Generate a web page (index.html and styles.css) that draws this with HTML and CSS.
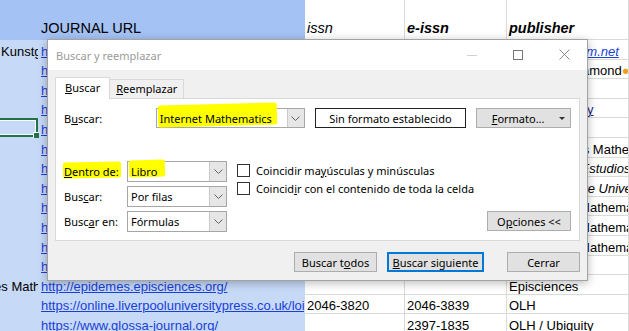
FILE: index.html
```html
<!DOCTYPE html>
<html lang="es">
<head>
    <meta charset="UTF-8">
    <meta name="viewport" content="width=device-width, initial-scale=1.0">
    <title>Buscar y reemplazar</title>
    <link rel="stylesheet" href="styles.css">
</head>
<body>
    <div class="sheet">
        <div class="row head">
            <div class="c sel-h"></div>
            <div class="c sel-h">JOURNAL URL</div>
            <div class="c it">issn</div>
            <div class="c bi">e-issn</div>
            <div class="c bi">publisher</div>
        </div>
        <div class="row">
            <div class="c sel">Kunstgeschichte</div>
            <div class="c sel"><a class="link">http://www.kunstgeschichte-ejournal.net/</a></div>
            <div class="c"></div><div class="c"></div>
            <div class="c it"><a class="link">http://www.ecm.net</a></div>
        </div>
        <div class="row">
            <div class="c sel"></div>
            <div class="c sel"><a class="link">https://www.journals.uio.no/</a></div>
            <div class="c"></div><div class="c"></div>
            <div class="c">Non-profit Diamond<span class="dot">●</span></div>
        </div>
        <div class="row">
            <div class="c sel"></div>
            <div class="c sel"><a class="link">https://www.imrn.oxfordjournals.org/</a></div>
            <div class="c"></div><div class="c"></div><div class="c"></div>
        </div>
        <div class="row">
            <div class="c sel"></div>
            <div class="c sel"><a class="link">https://www.ubiquitypress.com/</a></div>
            <div class="c"></div><div class="c"></div>
            <div class="c"><a class="link dark">OLH / Ubiquity</a></div>
        </div>
        <div class="row">
            <div class="c sel cur"></div>
            <div class="c sel"><a class="link">http://www.emis.de/journals/</a></div>
            <div class="c"></div><div class="c"></div><div class="c"></div>
        </div>
        <div class="row">
            <div class="c sel"></div>
            <div class="c sel"><a class="link">https://publi.math.unideb.hu/</a></div>
            <div class="c"></div><div class="c"></div>
            <div class="c">Publicaciones Mathematicae</div>
        </div>
        <div class="row">
            <div class="c sel"></div>
            <div class="c sel"><a class="link">https://revistas.ucm.es/</a></div>
            <div class="c"></div><div class="c"></div>
            <div class="c it">Revistas de Estudios</div>
        </div>
        <div class="row">
            <div class="c sel"></div>
            <div class="c sel"><a class="link">https://msupress.org/journals/</a></div>
            <div class="c"></div><div class="c"></div>
            <div class="c it">Michigan State University Press</div>
        </div>
        <div class="row">
            <div class="c sel"></div>
            <div class="c sel"><a class="link">https://ems.press/journals/pm</a></div>
            <div class="c"></div><div class="c"></div>
            <div class="c">Portuguese Mathematical Society</div>
        </div>
        <div class="row">
            <div class="c sel"></div>
            <div class="c sel"><a class="link">https://ems.press/journals/rmi</a></div>
            <div class="c"></div><div class="c"></div>
            <div class="c">Portuguese Mathematical Society</div>
        </div>
        <div class="row">
            <div class="c sel"></div>
            <div class="c sel"><a class="link">https://ems.press/journals/jems</a></div>
            <div class="c"></div><div class="c"></div>
            <div class="c">Portuguese Mathematical Society</div>
        </div>
        <div class="row">
            <div class="c sel"></div>
            <div class="c sel"><a class="link">https://www.internetmathematicsjournal.com/</a></div>
            <div class="c"></div><div class="c"></div><div class="c"></div>
        </div>
        <div class="row">
            <div class="c sel cut">Epidemes Mathematics</div>
            <div class="c sel"><a class="link">http://epidemes.episciences.org/</a></div>
            <div class="c"></div><div class="c"></div>
            <div class="c">Episciences</div>
        </div>
        <div class="row">
            <div class="c sel"></div>
            <div class="c sel"><a class="link">https://online.liverpooluniversitypress.co.uk/loi/bjs</a></div>
            <div class="c">2046-3820</div>
            <div class="c">2046-3839</div>
            <div class="c">OLH</div>
        </div>
        <div class="row">
            <div class="c sel"></div>
            <div class="c sel"><a class="link">https://www.glossa-journal.org/</a></div>
            <div class="c"></div>
            <div class="c">2397-1835</div>
            <div class="c">OLH / Ubiquity</div>
        </div>
    </div>

    <div class="dialog">
        <div class="titlebar">
            <span class="title">Buscar y reemplazar</span>
            <div class="win-btns">
                <span class="win-btn"><svg width="10" height="10" viewBox="0 0 10 10"><path d="M0 5.5h10" stroke="#d2d2d2"/></svg></span>
                <span class="win-btn"><svg width="10" height="10" viewBox="0 0 10 10"><rect x=".5" y=".5" width="9" height="9" fill="none" stroke="#767676"/></svg></span>
                <span class="win-btn"><svg width="11" height="11" viewBox="0 0 11 11"><path d="M.5 .5l10 10M10.5 .5l-10 10" stroke="#8c8c8c"/></svg></span>
            </div>
        </div>

        <div class="dlg-body">
            <div class="tabs">
                <div class="tab on"><u>B</u>uscar</div>
                <div class="tab"><u>R</u>eemplazar</div>
            </div>

            <div class="panel">
                <div class="find-row">
                    <span class="lbl">B<u>u</u>scar:</span>
                    <div class="combo wide">
                        <span class="val"><span class="hl hl-find">Internet Mathematics</span></span>
                        <span class="arrow"><svg width="9" height="5" viewBox="0 0 9 5"><path d="M.5 .5l4 4 4-4" fill="none" stroke="#606060"/></svg></span>
                    </div>
                    <div class="fmt-box">Sin formato establecido</div>
                    <div class="btn fmt"><span><u>F</u>ormato...</span></div>
                </div>

                <div class="opts">
                    <div class="opt-grid">
                        <span class="lbl"><span class="hl hl-within"><u>D</u>entro de:</span></span>
                        <div class="combo">
                            <span class="val"><span class="hl hl-book">Libro</span></span>
                            <span class="arrow"><svg width="9" height="5" viewBox="0 0 9 5"><path d="M.5 .5l4 4 4-4" fill="none" stroke="#606060"/></svg></span>
                        </div>
                        <span class="lbl">Bus<u>c</u>ar:</span>
                        <div class="combo">
                            <span class="val">Por filas</span>
                            <span class="arrow"><svg width="9" height="5" viewBox="0 0 9 5"><path d="M.5 .5l4 4 4-4" fill="none" stroke="#606060"/></svg></span>
                        </div>
                        <span class="lbl">Busc<u>a</u>r en:</span>
                        <div class="combo">
                            <span class="val">Fórmulas</span>
                            <span class="arrow"><svg width="9" height="5" viewBox="0 0 9 5"><path d="M.5 .5l4 4 4-4" fill="none" stroke="#606060"/></svg></span>
                        </div>
                    </div>

                    <div class="checks">
                        <label class="check"><span class="box"></span><span>Coincidir ma<u>y</u>úsculas y minúsculas</span></label>
                        <label class="check"><span class="box"></span><span>Coincid<u>i</u>r con el contenido de toda la celda</span></label>
                    </div>

                    <div class="btn opts-btn"><span>O<u>p</u>ciones &lt;&lt;</span></div>
                </div>
            </div>

            <div class="actions">
                <div class="btn all"><span>Buscar t<u>o</u>dos</span></div>
                <div class="btn next"><span><u>B</u>uscar siguiente</span></div>
                <div class="btn close">Cerrar</div>
            </div>
        </div>
    </div>
</body>
</html>
```

FILE: styles.css
```css
* { margin: 0; padding: 0; box-sizing: border-box; }

body {
    width: 629px;
    height: 331px;
    overflow: hidden;
    position: relative;
    background: #ffffff;
    font-family: "Liberation Sans", Arial, sans-serif;
    font-size: 13px;
    color: #000000;
}

/* spreadsheet behind the dialog */
.sheet { display: flex; flex-direction: column; }

.row {
    display: grid;
    grid-template-columns: 39px 266px 100px 102px 122px;
    height: 19.6px;
    flex-shrink: 0;
}

.row.head { height: 40px; font-size: 14.5px; }
.row.head .c { padding-bottom: 2px; line-height: 17px; }

.c {
    display: flex;
    align-items: flex-end;
    padding-left: 2px;
    white-space: nowrap;
    overflow: hidden;
    line-height: 15px;
    border-right: 1px solid #dadada;
    border-bottom: 1px solid #dadada;
    position: relative;
}

.sel { background: #c6d9f7; border-color: transparent; }
.sel-h { background: #a4c2f4; border-color: transparent; }
.sel:first-child { padding-left: 1px; }

.it { font-style: italic; }
.bi { font-style: italic; font-weight: 700; }

.link { color: #1a3fd6; text-decoration: underline; }
.link.dark { color: #1b2a80; }

.dot { color: #f2a01c; }

.cut { text-indent: -51px; }

/* active cell of the selection */
.cur { overflow: visible; }
.cur::before {
    content: '';
    position: absolute;
    left: -3px;
    top: 0;
    right: 0;
    bottom: 0;
    border: 2px solid #217346;
    box-shadow: inset 0 0 0 1px #ffffff;
}
.cur::after {
    content: '';
    position: absolute;
    right: -3px;
    bottom: -3px;
    width: 6px;
    height: 6px;
    background: #217346;
    border: 1px solid #ffffff;
}

/* find & replace dialog */
.dialog {
    position: absolute;
    left: 47px;
    top: 39px;
    width: 541px;
    height: 242px;
    border: 1px solid #a3a3a3;
    background: #f0f0f0;
    box-shadow: 0 2px 9px rgba(0, 0, 0, 0.28);
    display: flex;
    flex-direction: column;
    font-family: "Segoe UI", "Noto Sans", sans-serif;
    font-size: 11px;
    color: #000000;
}

.titlebar {
    height: 30px;
    background: #ffffff;
    display: flex;
    align-items: center;
    flex-shrink: 0;
}

.title { padding-left: 8px; color: #9a9a9a; }

.win-btns { margin-left: auto; display: flex; }

.win-btn {
    width: 46px;
    height: 30px;
    display: flex;
    align-items: center;
    justify-content: center;
    padding-bottom: 1px;
}

.dlg-body {
    flex: 1;
    padding: 7px 7px 8px;
    display: flex;
    flex-direction: column;
}

.tabs {
    display: flex;
    align-items: flex-end;
    height: 21px;
}

.tab {
    height: 19px;
    padding: 0 6px;
    line-height: 18px;
    border: 1px solid #d9d9d9;
    border-bottom: 0;
    border-left: 0;
}

.tab.on {
    height: 22px;
    margin-bottom: -1px;
    padding: 0 9px;
    line-height: 20px;
    background: #ffffff;
    border-left: 1px solid #d9d9d9;
    position: relative;
    z-index: 1;
}

.panel {
    height: 143px;
    background: #ffffff;
    border: 1px solid #d9d9d9;
    padding: 9px 8px 8px;
    display: flex;
    flex-direction: column;
}

.find-row {
    display: flex;
    align-items: center;
    gap: 10px;
    height: 20px;
}

.find-row .lbl { width: 82px; }

.combo {
    display: flex;
    height: 21px;
    border: 1px solid #a6a6a6;
    background: #ffffff;
}

.combo.wide { width: 149px; height: 20px; }

.combo .val {
    flex: 1;
    padding-left: 3px;
    display: flex;
    align-items: center;
    white-space: nowrap;
}

.combo .arrow {
    width: 17px;
    background: #e6e6e6;
    border-left: 1px solid #c9c9c9;
    display: flex;
    align-items: center;
    justify-content: center;
}

.fmt-box {
    width: 152px;
    height: 20px;
    border: 1px solid #222222;
    background: #ffffff;
    display: flex;
    align-items: center;
    justify-content: center;
}

.btn {
    height: 20px;
    border: 1px solid #adadad;
    background: #e1e1e1;
    display: flex;
    align-items: center;
    justify-content: center;
    white-space: nowrap;
}

.btn.fmt { width: 95px; position: relative; padding-right: 11px; }
.btn.fmt::after {
    content: '';
    position: absolute;
    right: 5px;
    top: 8px;
    border-left: 3px solid transparent;
    border-right: 3px solid transparent;
    border-top: 3px solid #333333;
}

.opts { display: flex; margin-top: 33px; }

.opt-grid {
    display: grid;
    grid-template-columns: 63px 100px;
    grid-auto-rows: 21px;
    row-gap: 4px;
    align-items: center;
}

.checks { margin-left: 10px; display: flex; flex-direction: column; }

.check {
    height: 18px;
    display: flex;
    align-items: center;
    gap: 6px;
    white-space: nowrap;
}

.box {
    width: 13px;
    height: 13px;
    border: 1px solid #333333;
    background: #ffffff;
}

.btn.opts-btn { width: 84px; margin-left: auto; align-self: flex-end; margin-bottom: 1px; }

.actions {
    display: flex;
    justify-content: flex-end;
    gap: 10px;
    margin-top: 11px;
}

.btn.all { width: 83px; }
.btn.next { width: 97px; border: 2px solid #0078d7; margin-right: 13px; }
.btn.close { width: 73px; }

/* yellow marker strokes */
.hl { position: relative; z-index: 0; }
.hl::before {
    content: '';
    position: absolute;
    z-index: -1;
    background: #ffff00;
    border-radius: 2px;
}
.hl-find::before { left: -2px; right: -5px; top: -7px; bottom: 0; transform: rotate(-1.5deg); }
.hl-within::before { left: -1px; right: -2px; top: -2px; bottom: 1px; transform: rotate(-1deg); }
.hl-book::before { left: -2px; right: -8px; top: -4px; bottom: 2px; transform: rotate(-2deg); }
```
